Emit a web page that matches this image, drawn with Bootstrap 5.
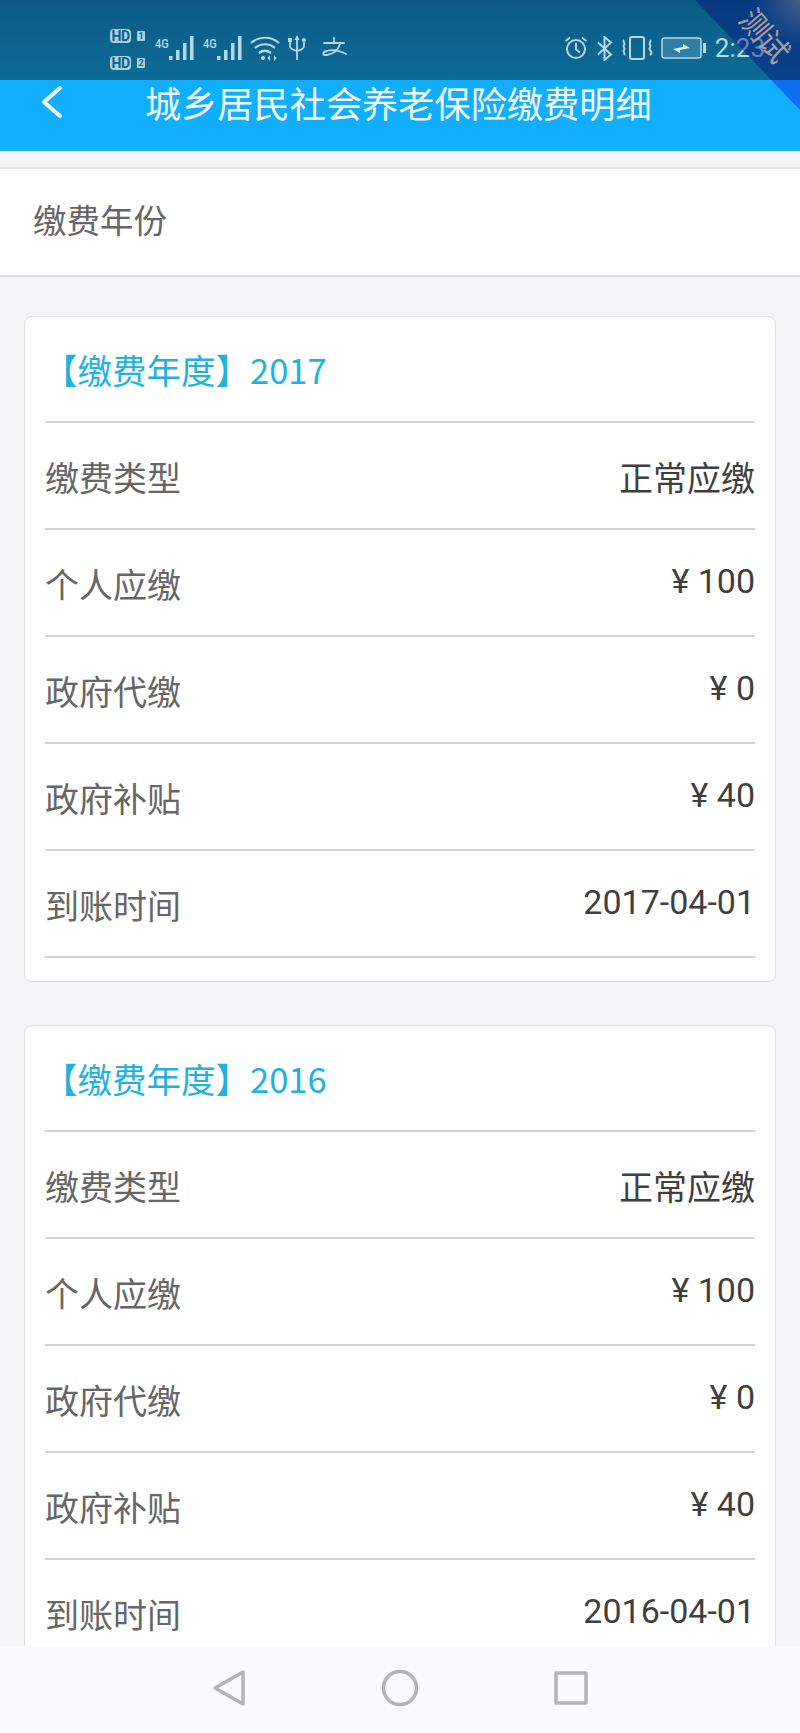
<!DOCTYPE html>
<html lang="zh">
<head>
  <meta charset="UTF-8">
  <meta name="viewport" content="width=device-width, initial-scale=1.0">
  <title>城乡居民社会养老保险缴费明细</title>
  <link href="https://cdn.jsdelivr.net/npm/bootstrap@5.3.3/dist/css/bootstrap.min.css" rel="stylesheet">
  <style>
    html, body { height: 100%; }
    body {
      margin: 0;
      background: #f5f5f7;
      font-family: "Noto Sans CJK SC", Roboto, sans-serif;
      overflow: hidden;
    }
    .phone { width: 800px; height: 1733px; position: relative; overflow: hidden; }
    .status-strip {
      height: 80px;
      flex: none;
      background: linear-gradient(180deg, #0b5a86 0%, #0e6c96 100%);
      color: #b5d8ea;
      padding: 29px 35px 0 110px;
    }
    .sim-col { font-size: 14px; line-height: 14px; font-weight: 700; font-family: Roboto, sans-serif; gap: 13px; }
    .hd-tag { display: inline-block; background: #a9d0e4; color: #0d6190; border-radius: 4px; width: 21px; height: 14px; text-align: center; letter-spacing: -.5px; }
    .hd-num { display: inline-block; margin-left: 6px; width: 8px; height: 10px; background: #a9d0e4; color: #0d6190; border-radius: 1px; font-size: 9px; line-height: 10px; text-align: center; }
    .net-row { margin-top: 6px; margin-left: 9px; }
    .net-tag { font-size: 13px; font-family: Roboto, sans-serif; line-height: 1; font-weight: 500; align-self: flex-start; margin-top: 2px; width: 14px; transform: scaleX(.85); }
    .icon-right { margin-top: 6px; }
    .clock-text { font-family: Roboto, sans-serif; font-size: 26px; line-height: 1; margin-left: 8px; }
    .title-bar {
      height: 71px;
      flex: none;
      background: #12aeff;
      color: #f2fbff;
      font-size: 36.200px;
      line-height: 1;
      padding: 0 0 27px 40px;
    }
    .title-text { margin-left: 81px; }
    .corner-ribbon {
      position: absolute;
      top: 0;
      right: 0;
      width: 105px;
      height: 110px;
      background:
        radial-gradient(circle at 100% 0, rgba(140,140,150,.45) 0, rgba(140,140,150,0) 45px),
        linear-gradient(180deg, rgba(0,10,120,.42) 80px, rgba(0,0,220,.36) 80px);
      clip-path: polygon(0 0, 100% 0, 100% 100%);
    }
    .ribbon-text {
      position: absolute;
      top: 19px;
      right: 5px;
      font-size: 30px;
      line-height: 1;
      color: #ad9c9c;
      transform: rotate(50deg);
      letter-spacing: -1px;
    }
    .filter-box {
      margin-top: 16px;
      height: 110px;
      flex: none;
      background: #fff;
      border-top: 2px solid #e2e2e2;
      border-bottom: 2px solid #dedede;
      color: #666;
      font-size: 33.500px;
      padding: 0 0 5px 33px;
    }
    .scroll-area { flex: 1 1 auto; min-height: 0; overflow: hidden; padding: 39px 24px 0; }
    .pay-card {
      border: 1px solid #e0e0e2;
      border-radius: 8px;
      padding: 0 20px 23px;
      margin-bottom: 43px;
      background: #fff;
    }
    .pay-head {
      height: 106px;
      color: #1fb1e0;
      font-size: 34.500px;
      border-bottom: 2px solid #d2d2d2;
      padding-top: 2px;
    }
    .pay-head span { margin-left: -2px; }
    .pay-row {
      height: 107px;
      border-bottom: 2px solid #d2d2d2;
    }
    .pay-label { color: #666; font-size: 34px; margin-top: 1px; }
    .pay-value { color: #3f3f3f; font-size: 34px; font-family: Roboto, "Noto Sans CJK SC", sans-serif; margin-bottom: 3px; }
    .pay-value-cn { color: #3f3f3f; font-size: 34px; margin-top: 2px; }
    .soft-bar { height: 87px; flex: none; background: #fbfbfd; gap: 135px; padding-bottom: 4px; }
  </style>
</head>
<body>
<div class="phone d-flex flex-column">

  <div class="status-strip d-flex align-items-start">
    <div class="sim-col d-flex flex-column">
      <div class="d-flex align-items-center"><span class="hd-tag">HD</span><span class="hd-num">1</span></div>
      <div class="d-flex align-items-center"><span class="hd-tag">HD</span><span class="hd-num">2</span></div>
    </div>
    <div class="net-row d-flex align-items-center">
      <span class="net-tag">4G</span>
      <svg width="26" height="26" viewBox="0 0 26 26" fill="#b5d8ea"><rect x="1" y="21" width="3.500" height="4"/><rect x="8" y="15" width="3.500" height="10"/><rect x="15" y="8" width="3.500" height="17"/><rect x="22" y="1" width="3.500" height="24"/></svg>
      <span class="net-tag ms-2">4G</span>
      <svg width="26" height="26" viewBox="0 0 26 26" fill="#b5d8ea"><rect x="1" y="21" width="3.500" height="4"/><rect x="8" y="15" width="3.500" height="10"/><rect x="15" y="8" width="3.500" height="17"/><rect x="22" y="1" width="3.500" height="24"/></svg>
      <svg class="ms-2" width="30" height="25" viewBox="0 0 30 25" fill="none" stroke="#b5d8ea" stroke-width="2.200"><path d="M1 7c8-7 20-7 28 0"/><path d="M5 12c6-5 14-5 20 0"/><path d="M9 17c4-3 8-3 12 0"/><circle cx="13" cy="22" r="2" fill="#b5d8ea" stroke="none"/><path d="M20 19l-2.500 3 2.500 3zM24 19l2.500 3-2.500 3z" fill="#b5d8ea" stroke="none"/></svg>
      <svg class="ms-2" width="18" height="26" viewBox="0 0 18 26" fill="none" stroke="#b5d8ea" stroke-width="1.800"><path d="M9 4v21M2 7v4c0 3 3 4 7 5 4-1 7-2 7-5V7"/><path d="M6.500 5L9 0l2.500 5z" fill="#b5d8ea" stroke="none"/><rect x="0" y="3" width="4" height="4" fill="#b5d8ea" stroke="none"/><circle cx="16" cy="5" r="2" fill="#b5d8ea" stroke="none"/></svg>
      <svg class="ms-3" width="25" height="22" viewBox="0 0 25 22" fill="none" stroke="#b5d8ea" stroke-width="1.800" stroke-linecap="round"><path d="M2 6h20M12 1v5M18 7c-2 6-7 10-13 11-5 1-5-3 0-4 6-2 13 0 19 3"/></svg>
    </div>
    <div class="icon-right d-flex align-items-center ms-auto">
      <svg width="24" height="24" viewBox="0 0 24 24" fill="none" stroke="#b5d8ea" stroke-width="2"><circle cx="12" cy="13" r="9"/><path d="M12 7v6.500l4 3M1.500 5L6 1.500M22.500 5L18 1.500"/></svg>
      <svg class="ms-2" width="17" height="25" viewBox="0 0 17 25" fill="none" stroke="#b5d8ea" stroke-width="2"><path d="M2 6.500l13 12-6.500 5.500V1l6.500 5.500L2 18.500"/></svg>
      <svg class="ms-2" width="32" height="24" viewBox="0 0 32 24" fill="none" stroke="#b5d8ea" stroke-width="2"><rect x="9" y="1" width="14" height="22" rx="2"/><path d="M3 4c-2 2 2 3 0 5s2 3 0 5 2 3 0 5M29 4c2 2-2 3 0 5s-2 3 0 5 2 3 0 5"/></svg>
      <svg class="ms-2" width="46" height="22" viewBox="0 0 46 22"><rect x="1" y="1" width="39" height="20" rx="2.500" fill="#5d9dbd" fill-opacity=".45" stroke="#b5d8ea" stroke-width="1.500"/><rect x="42" y="6" width="3" height="10" fill="#b5d8ea"/><path d="M12 12l10-2 0-3 7 4-10 2 0 3z" fill="#dcecf5"/></svg>
      <span class="clock-text">2:23</span>
    </div>
  </div>

  <div class="title-bar d-flex align-items-center">
    <svg width="24" height="34" viewBox="0 0 24 34" fill="none" stroke="#f2fbff" stroke-width="4" stroke-linecap="round" stroke-linejoin="round"><path d="M20 3L4 17l16 14"/></svg>
    <span class="title-text">城乡居民社会养老保险缴费明细</span>
  </div>

  <div class="corner-ribbon"></div>
  <span class="ribbon-text">测试</span>

  <div class="filter-box d-flex align-items-center">缴费年份</div>

  <main class="scroll-area">
    <div class="card pay-card">
      <div class="pay-head d-flex align-items-center"><span>【缴费年度】2017</span></div>
      <div class="pay-row d-flex justify-content-between align-items-center"><span class="pay-label">缴费类型</span><span class="pay-value-cn">正常应缴</span></div>
      <div class="pay-row d-flex justify-content-between align-items-center"><span class="pay-label">个人应缴</span><span class="pay-value">¥ 100</span></div>
      <div class="pay-row d-flex justify-content-between align-items-center"><span class="pay-label">政府代缴</span><span class="pay-value">¥ 0</span></div>
      <div class="pay-row d-flex justify-content-between align-items-center"><span class="pay-label">政府补贴</span><span class="pay-value">¥ 40</span></div>
      <div class="pay-row d-flex justify-content-between align-items-center"><span class="pay-label">到账时间</span><span class="pay-value">2017-04-01</span></div>
    </div>
    <div class="card pay-card">
      <div class="pay-head d-flex align-items-center"><span>【缴费年度】2016</span></div>
      <div class="pay-row d-flex justify-content-between align-items-center"><span class="pay-label">缴费类型</span><span class="pay-value-cn">正常应缴</span></div>
      <div class="pay-row d-flex justify-content-between align-items-center"><span class="pay-label">个人应缴</span><span class="pay-value">¥ 100</span></div>
      <div class="pay-row d-flex justify-content-between align-items-center"><span class="pay-label">政府代缴</span><span class="pay-value">¥ 0</span></div>
      <div class="pay-row d-flex justify-content-between align-items-center"><span class="pay-label">政府补贴</span><span class="pay-value">¥ 40</span></div>
      <div class="pay-row d-flex justify-content-between align-items-center"><span class="pay-label">到账时间</span><span class="pay-value">2016-04-01</span></div>
    </div>
  </main>

  <div class="soft-bar d-flex align-items-center justify-content-center">
    <svg width="34" height="38" viewBox="0 0 34 38" fill="none" stroke="#b4b4b4" stroke-width="3.500" stroke-linejoin="round"><path d="M31 3v32L3 19z"/></svg>
    <svg width="38" height="38" viewBox="0 0 38 38" fill="none" stroke="#b4b4b4" stroke-width="3.500"><circle cx="19" cy="19" r="16.500"/></svg>
    <svg width="34" height="34" viewBox="0 0 34 34" fill="none" stroke="#b4b4b4" stroke-width="3.500" stroke-linejoin="round"><rect x="2" y="2" width="30" height="30"/></svg>
  </div>
</div>
<script src="https://cdn.jsdelivr.net/npm/bootstrap@5.3.3/dist/js/bootstrap.bundle.min.js"></script>
</body>
</html>
